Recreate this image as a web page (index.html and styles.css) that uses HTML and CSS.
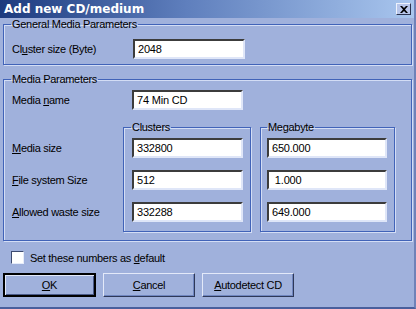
FILE: index.html
```html
<!DOCTYPE html>
<html lang="en">
<head>
  <meta charset="UTF-8">
  <title>Add new CD/medium</title>
  <link rel="stylesheet" href="styles.css">
</head>
<body>
  <div class="dialog">

    <!-- TITLE BAR -->
    <div class="titlebar">
      <span class="title">Add new CD/medium</span>
      <span class="closeBtn">
        <svg width="8" height="7" viewBox="0 0 8 7"><path d="M0 0h2l2 2 2-2h2L5 3.5 8 7H6L4 5 2 7H0l3-3.5z" fill="#000"/></svg>
      </span>
    </div>

    <div class="content">

      <!-- GENERAL -->
      <fieldset class="group group1">
        <legend>General Media Parameters</legend>
        <div class="row">
          <label class="label wide">Cl<u>u</u>ster size (Byte)</label>
          <input class="field" type="text" value="2048" readonly>
        </div>
      </fieldset>

      <!-- MEDIA -->
      <fieldset class="group group2">
        <legend>Media Parameters</legend>
        <div class="row">
          <label class="label">Media <u>n</u>ame</label>
          <input class="field" type="text" value="74 Min CD" readonly>
        </div>

        <div class="cols">
          <div class="labels">
            <label class="label"><u>M</u>edia size</label>
            <label class="label"><u>F</u>ile system Size</label>
            <label class="label"><u>A</u>llowed waste size</label>
          </div>

          <fieldset class="group sub clusters">
            <legend>Clusters</legend>
            <input class="field" type="text" value="332800" readonly>
            <input class="field" type="text" value="512" readonly>
            <input class="field" type="text" value="332288" readonly>
          </fieldset>

          <fieldset class="group sub megabyte">
            <legend>Megabyte</legend>
            <input class="field" type="text" value="650.000" readonly>
            <input class="field" type="text" value=" 1.000" readonly>
            <input class="field" type="text" value="649.000" readonly>
          </fieldset>
        </div>
      </fieldset>

      <!-- CHECKBOX -->
      <div class="check">
        <span class="box"></span>
        <span>Set these numbers as <u>d</u>efault</span>
      </div>

      <!-- BUTTONS -->
      <div class="buttons">
        <button class="button default"><u>O</u>K</button>
        <button class="button"><u>C</u>ancel</button>
        <button class="button"><u>A</u>utodetect CD</button>
      </div>

    </div>
  </div>
</body>
</html>
```

FILE: styles.css
```css
:root {
  --bg: #a0b1dc;
  --line: #4163b8;
  --light: #d3ddf5;
  --dark: #3a3a3a;
}
* { margin:0; padding:0; box-sizing:border-box; }
html, body { background:var(--bg); font-family:"Liberation Sans",Arial,sans-serif; font-size:11px; letter-spacing:-0.3px; color:#000; }
u { text-decoration:underline; text-underline-offset:1px; }

.dialog {
  width:416px; height:309px;
  background:var(--bg);
  border-right:2px solid #6f82b8;
  border-bottom:2px solid #4a5f9c;
  display:flex; flex-direction:column;
}

/* TITLE BAR */
.titlebar {
  height:18px;
  display:flex; align-items:center; justify-content:space-between;
  padding:0 3px 0 4px;
  background:linear-gradient(to right, #1c3a7e, #5f7fbd 45%, #a9c6ee);
}
.title { color:#fff; font-family:"DejaVu Sans",sans-serif; font-weight:bold; font-size:12px; letter-spacing:0; }
.closeBtn {
  width:15px; height:12px;
  display:flex; align-items:center; justify-content:center;
  background:#b8c6ea;
  border:1px solid; border-color:#eef2fc #2a3350 #2a3350 #eef2fc;
}

/* CONTENT */
.content { padding:0 2px 0 3px; display:flex; flex-direction:column; }

.group {
  border:1px solid var(--line);
  box-shadow:1px 1px 0 var(--light), inset 1px 1px 0 var(--light);
  min-width:0;
}
.group legend { padding:0 1px; margin-left:-1px; line-height:13px; }

.group1 { padding:8px 0 5px 8px; }
.group2 { margin-top:8px; padding:4px 0 8px 8px; }

.row { display:flex; align-items:center; }
.label { display:block; width:120px; height:20px; line-height:20px; white-space:nowrap; }
.label.wide { width:121px; }

.field {
  height:20px;
  width:111px;
  padding:0 3px;
  background:#fff;
  border:2px solid;
  border-color:#3c3c3c #dfe6f8 #dfe6f8 #3c3c3c;
  font:11px "Liberation Sans",Arial,sans-serif;
  letter-spacing:-0.2px;
  outline:none;
}
.group1 .field { width:112px; }

.cols { display:flex; margin-top:11px; }
.labels { width:111px; display:flex; flex-direction:column; gap:12px; padding-top:17px; }

.sub { display:flex; flex-direction:column; gap:12px; padding:4px 7px 9px 8px; }
.clusters { width:128px; }
.megabyte { width:135px; margin-left:9px; padding-left:6px; }
.megabyte legend { margin-left:0; }
.megabyte .field { width:120px; }

/* CHECKBOX */
.check { display:flex; align-items:center; gap:6px; margin-top:10px; padding-left:8px; height:13px; }
.box {
  width:13px; height:13px; background:#fff;
  border:1px solid; border-color:#3c4a70 #e6ecfa #e6ecfa #3c4a70;
}

/* BUTTONS */
.buttons { display:flex; gap:7px; margin-top:9px; }
.button {
  width:92px; height:24px;
  background:var(--bg);
  border:1px solid; border-color:#e3e9f9 #2e3858 #2e3858 #e3e9f9;
  box-shadow:inset -1px -1px 0 #7086c0;
  font:11px "Liberation Sans",Arial,sans-serif;
  letter-spacing:-0.3px;
}
.button.default { width:93px; border:2px solid #000; box-shadow:inset 1px 1px 0 #e3e9f9, inset -1px -1px 0 #4a5a88; }
```
